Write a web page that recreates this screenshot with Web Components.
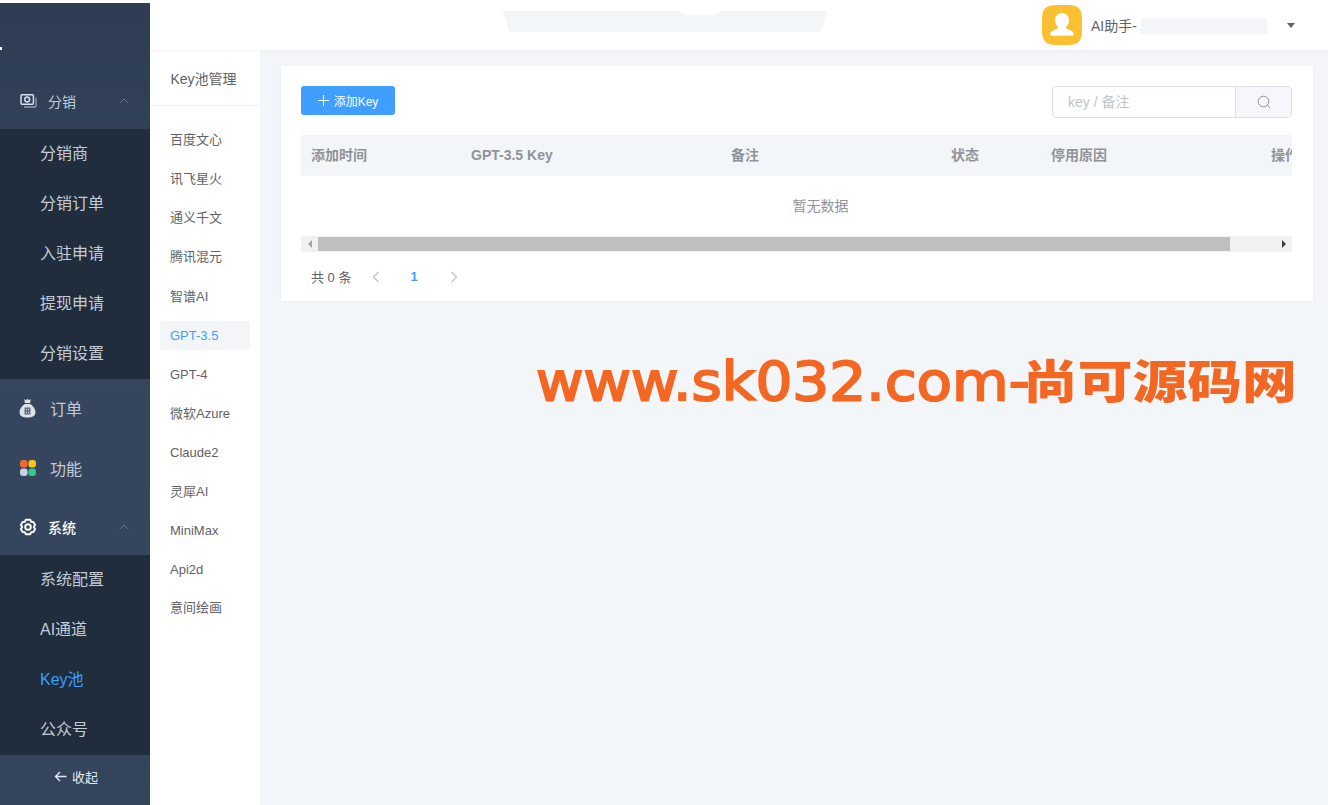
<!DOCTYPE html>
<html lang="zh">
<head>
<meta charset="utf-8">
<title>Key池</title>
<style>
html, body { margin: 0; padding: 0; height: 100%; background: #fff; overflow: hidden; }
body { font-family: "Liberation Sans", "Noto Sans CJK SC", sans-serif; }
app-shell { height: 805px; }
</style>
</head>
<body>
<app-shell>
  <side-bar slot="side">
    <nav-group label="分销" open icon="photos" head="54" lift="3">
      <nav-item>分销商</nav-item>
      <nav-item>分销订单</nav-item>
      <nav-item>入驻申请</nav-item>
      <nav-item>提现申请</nav-item>
      <nav-item>分销设置</nav-item>
    </nav-group>
    <nav-group label="订单" icon="bag" head="60" lift="3"></nav-group>
    <nav-group label="功能" icon="apps" head="60" lift="3"></nav-group>
    <nav-group label="系统" open bright icon="gear" head="56" lift="0">
      <nav-item>系统配置</nav-item>
      <nav-item>AI通道</nav-item>
      <nav-item active>Key池</nav-item>
      <nav-item>公众号</nav-item>
    </nav-group>
  </side-bar>
  <top-bar slot="top"></top-bar>
  <sub-nav slot="sub" title="Key池管理">
    <sub-item>百度文心</sub-item>
    <sub-item>讯飞星火</sub-item>
    <sub-item>通义千文</sub-item>
    <sub-item>腾讯混元</sub-item>
    <sub-item>智谱AI</sub-item>
    <sub-item active>GPT-3.5</sub-item>
    <sub-item>GPT-4</sub-item>
    <sub-item>微软Azure</sub-item>
    <sub-item>Claude2</sub-item>
    <sub-item>灵犀AI</sub-item>
    <sub-item>MiniMax</sub-item>
    <sub-item>Api2d</sub-item>
    <sub-item>意间绘画</sub-item>
  </sub-nav>
  <key-card slot="main"></key-card>
  <water-mark slot="over"><span slot="latin">www.sk032.com-</span><span slot="cjk">尚可源码网</span></water-mark>
</app-shell>

<script>
const ICONS = {
  photos: `<svg width="18" height="15" viewBox="0 0 18 15" fill="none">
    <path d="M17 4.500V13a1 1 0 0 1-1 1H5" stroke="#8fa0b4" stroke-width="1.300"/>
    <rect x="2" y="1.700" width="12.400" height="9.600" rx="1" stroke="#d5e0ea" stroke-width="1.500"/>
    <circle cx="8.200" cy="6.500" r="2.400" stroke="#d5e0ea" stroke-width="1.500"/></svg>`,
  bag: `<svg width="17" height="20" viewBox="0 0 17 20"><path fill="#dfe3e8" d="M5.200 1 7 2.300 8.500.8 10 2.300 11.800 1l-.7 4H5.900zM5.700 6h5.600c2.900 2.100 5.200 5 5.200 8.200 0 3.600-2.700 5.300-8 5.300s-8-1.700-8-5.300C.5 11 2.800 8.100 5.700 6z"/><path fill="none" stroke="#56677e" stroke-width="1.300" d="M6.200 10.200h4.600v5.600H6.200zM8.500 10.200v5.600M6.200 13h4.600"/></svg>`,
  apps: `<svg width="18" height="18" viewBox="0 0 18 18"><rect x="1" y="1" width="7.600" height="7.600" rx="3" fill="#f4682c"/><rect x="9.400" y="1" width="7.600" height="7.600" rx="3" fill="#fcc419"/><rect x="1" y="9.400" width="7.600" height="7.600" rx="3" fill="#c9cfe6"/><rect x="9.400" y="9.400" width="7.600" height="7.600" rx="3" fill="#2ecc8b"/></svg>`,
  gear: `<svg width="18" height="18" viewBox="0 0 18 18" fill="none" stroke="#fff" stroke-width="1.900" stroke-linejoin="round"><path d="M6.700 1.800h4.600l.9 2 2.200.2 1.700 2.900-1.300 2.100 1.300 2.100-1.700 2.900-2.200.2-.9 2H6.700l-.9-2-2.200-.2-1.700-2.900L3.200 9 1.900 6.900 3.600 4l2.200-.2z"/><circle cx="9" cy="9" r="2.800"/></svg>`
};

class AppShell extends HTMLElement {
  constructor() {
    super();
    this.attachShadow({ mode: "open" }).innerHTML = `
      <style>
        :host { display: flex; position: relative; width: 1328px; overflow: hidden; background: #fff; }
        .side { display: block; width: 150px; flex: none; padding-top: 3px; box-sizing: border-box; height: 100%; }
        .right { flex: 1; display: flex; flex-direction: column; min-width: 0; }
        .body { flex: 1; display: flex; background: #f2f6f9; min-height: 0; }
        .main { flex: 1; padding: 16px 15px 0 21px; min-width: 0; }
      </style>
      <div class="side"><slot name="side"></slot></div>
      <div class="right">
        <slot name="top"></slot>
        <div class="body">
          <slot name="sub"></slot>
          <div class="main"><slot name="main"></slot></div>
        </div>
      </div>
      <slot name="over"></slot>`;
  }
}

class SideBar extends HTMLElement {
  constructor() {
    super();
    this.attachShadow({ mode: "open" }).innerHTML = `
      <style>
        :host { display: flex; flex-direction: column; height: 100%; background: linear-gradient(#2e3d53, #36465e 40%, #34445c); color: #cfd6df; position: relative; }
        .logo { height: 72px; flex: none; }
        .tick { position: absolute; left: 0; top: 44px; width: 2px; height: 3px; background: #fff; }
        .list { flex: 1; }
        .fold { height: 50px; flex: none; display: flex; align-items: center; justify-content: center; gap: 5px; font-size: 13px; color: #e4e8ee; padding: 0 0 8px 2px; box-sizing: border-box; }
        svg { display: block; }
      </style>
      <div class="logo"><div class="tick"></div></div>
      <div class="list"><slot></slot></div>
      <div class="fold">
        <svg width="13" height="11" viewBox="0 0 13 11" fill="none" stroke="#e4e8ee" stroke-width="1.400"><path d="M12.500 5.500H1.500M6 1 1.500 5.500 6 10"/></svg>
        <span>收起</span>
      </div>`;
  }
}

class NavGroup extends HTMLElement {
  constructor() {
    super();
    const open = this.hasAttribute("open");
    const bright = this.hasAttribute("bright");
    const label = this.getAttribute("label");
    const icon = ICONS[this.getAttribute("icon")];
    this.attachShadow({ mode: "open" }).innerHTML = `
      <style>
        :host { display: block; }
        .head { display: flex; align-items: center; height: ${this.getAttribute("head")}px; padding: 0 0 ${this.getAttribute("lift")}px 18px; box-sizing: border-box; }
        .ico { width: 19px; display: flex; justify-content: center; margin-right: ${open ? 11 : 13}px; }
        .label { font-size: ${open ? 14 : 16}px; color: ${bright ? "#fff" : "#c3ccd6"}; flex: 1; ${bright ? "font-weight:500;" : ""} }
        .arrow { margin-right: 21px; }
        .sub { background: #1f2d3d; }
        svg { display: block; }
      </style>
      <div class="head">
        <span class="ico">${icon}</span>
        <span class="label">${label}</span>
        ${open ? `<svg class="arrow" width="10" height="6" viewBox="0 0 10 6" fill="none" stroke="#66758a" stroke-width="1"><path d="M.8 5.300 5 1l4.200 4.300"/></svg>` : ""}
      </div>
      ${open ? `<div class="sub"><slot></slot></div>` : ""}`;
  }
}

class NavItem extends HTMLElement {
  constructor() {
    super();
    this.attachShadow({ mode: "open" }).innerHTML = `
      <style>
        :host { display: flex; align-items: center; height: 50px; box-sizing: border-box; padding: 0 0 4px 40px; font-size: 16px; color: #c3ccd6; }
        :host([active]) { color: #409eff; }
      </style>
      <slot></slot>`;
  }
}

class TopBar extends HTMLElement {
  constructor() {
    super();
    this.attachShadow({ mode: "open" }).innerHTML = `
      <style>
        :host { display: flex; align-items: center; height: 50px; flex: none; background: #fff; position: relative; z-index: 1; box-sizing: border-box; padding-left: 353px; box-shadow: 0 1px 3px rgba(0,21,41,.05); }
        .blur { background: #f3f6f8; filter: blur(.6px); }
        .title { width: 324px; height: 21px; margin-top: -7px; clip-path: polygon(0 0, 54% 0, 57% 18%, 65% 18%, 67% 0, 100% 0, 98% 100%, 2% 100%); }
        .user { margin-left: 215px; display: flex; align-items: center; }
        .ava { width: 40px; height: 40px; margin-right: 9px; }
        .name { font-size: 14px; color: #606266; }
        .blur2 { width: 126px; height: 16px; margin-left: 4px; margin-top: 2px; }
        .caret { margin-left: 20px; width: 0; height: 0; border: 4px solid transparent; border-top: 5px solid #606266; border-bottom: 0; }
        svg { display: block; }
      </style>
      <div class="blur title"></div>
      <div class="user">
        <svg class="ava" viewBox="0 0 40 40"><path fill="#fbbf32" d="M14 0h12c10 0 14 4 14 14v12c0 10-4 14-14 14H14C4 40 0 36 0 26V14C0 4 4 0 14 0z"/><path fill="#fff" d="M20 8c4.200 0 7 3 7 7.300 0 2.800-1 4.900-2.600 6.300-.7.600-.6 1.700.3 2.100l4.300 1.900c1.800.8 2.700 2 2.700 3.600 0 .9-.7 1.500-1.600 1.500H9.900c-.9 0-1.600-.6-1.600-1.500 0-1.600.9-2.800 2.700-3.600l4.300-1.900c.9-.4 1-1.500.3-2.100C14 20.200 13 18.100 13 15.300 13 11 15.800 8 20 8z"/></svg>
        <span class="name">AI助手-</span>
        <div class="blur blur2"></div>
        <div class="caret"></div>
      </div>`;
  }
}

class SubNav extends HTMLElement {
  constructor() {
    super();
    this.attachShadow({ mode: "open" }).innerHTML = `
      <style>
        :host { display: block; width: 110px; flex: none; background: #fff; box-sizing: border-box; }
        .title { height: 56px; line-height: 58px; border-bottom: 1px solid #eceff3; text-align: center; font-size: 14px; color: #606266; box-sizing: border-box; padding-right: 3px; }
        .items { display: flex; flex-direction: column; gap: 10px; padding: 20px 10px 0; }
      </style>
      <div class="title">${this.getAttribute("title")}</div>
      <div class="items"><slot></slot></div>`;
  }
}

class SubItem extends HTMLElement {
  constructor() {
    super();
    this.attachShadow({ mode: "open" }).innerHTML = `
      <style>
        :host { display: flex; align-items: center; height: 29px; box-sizing: border-box; padding-left: 10px; font-size: 13px; color: #606266; border-radius: 2px; }
        :host([active]) { background: #f2f6f9; color: #409eff; }
      </style>
      <slot></slot>`;
    // cjk glyphs sit lower than in the reference font
    const text = this.textContent.trim();
    if (/^[\u4e00-\u9fff]+$/.test(text)) this.style.paddingBottom = "4px";
    else if (/[\u4e00-\u9fff]/.test(text)) this.style.paddingBottom = "2px";
  }
}

class KeyCard extends HTMLElement {
  constructor() {
    super();
    const cols = [["添加时间", 160], ["GPT-3.5 Key", 260], ["备注", 220], ["状态", 100], ["停用原因", 220], ["操作", 60]];
    this.attachShadow({ mode: "open" }).innerHTML = `
      <style>
        :host { display: block; background: #fff; height: 235px; box-sizing: border-box; padding: 20px 21px 0 20px; box-shadow: 0 0 3px rgba(0,20,40,.05); color: #606266; }
        .tools { display: flex; justify-content: space-between; align-items: flex-start; height: 49px; }
        .add { display: flex; align-items: center; justify-content: center; gap: 5px; width: 94px; height: 29px; background: #409eff; color: #fff; font-size: 12px; border-radius: 3px; }
        .search { display: flex; width: 240px; height: 32px; box-sizing: border-box; border: 1px solid #dcdfe6; border-radius: 4px; }
        .search .ph { flex: 1; padding-left: 15px; font-size: 14px; line-height: 31px; color: #c0c4cc; }
        .search .btn { width: 56px; flex: none; box-sizing: border-box; background: #f5f7fa; border-left: 1px solid #dcdfe6; display: flex; align-items: center; justify-content: center; border-radius: 0 3px 3px 0; }
        .thead { display: flex; height: 41px; background: #f3f6f8; overflow: hidden; }
        .thead span { flex: none; padding-left: 10px; box-sizing: border-box; font-size: 14px; font-weight: bold; color: #909399; line-height: 40px; white-space: nowrap; }
        .empty { height: 60px; line-height: 60px; padding-left: 48px; text-align: center; font-size: 14px; color: #909399; }
        .bar { display: flex; align-items: center; height: 16px; background: #f1f1f1; }
        .bar i { display: flex; width: 17px; justify-content: center; flex: none; }
        .bar .track { flex: 1; height: 14px; }
        .bar .thumb { width: 912px; height: 14px; background: #bfbfbf; }
        .arrow-l { width: 0; height: 0; border: 4px solid transparent; border-right: 4px solid #a3a3a3; border-left: 0; }
        .arrow-r { width: 0; height: 0; border: 4px solid transparent; border-left: 4px solid #404040; border-right: 0; }
        .pager { display: flex; align-items: center; height: 49px; padding-left: 10px; font-size: 13px; color: #606266; }
        .pager .num { font-weight: bold; color: #409eff; font-size: 13px; margin: 0 32px 0 30px; }
        .pager .prev { margin-left: 21px; }
        svg { display: block; }
      </style>
      <div class="tools">
        <div class="add">
          <svg width="11" height="11" viewBox="0 0 11 11" stroke="#fff" stroke-width="1.100"><path d="M5.500 0v11M0 5.500h11"/></svg>
          <span>添加Key</span>
        </div>
        <div class="search">
          <div class="ph">key / 备注</div>
          <div class="btn">
            <svg width="14" height="14" viewBox="0 0 14 14" fill="none" stroke="#909399" stroke-width="1"><circle cx="6.500" cy="6.500" r="5.300"/><path d="m10.500 10.500 2.500 2.500"/></svg>
          </div>
        </div>
      </div>
      <div class="thead">${cols.map(c => `<span style="width:${c[1]}px">${c[0]}</span>`).join("")}</div>
      <div class="empty">暂无数据</div>
      <div class="bar">
        <i><span class="arrow-l"></span></i>
        <div class="track"><div class="thumb"></div></div>
        <i><span class="arrow-r"></span></i>
      </div>
      <div class="pager">
        <span>共 0 条</span>
        <svg class="prev" width="8" height="12" viewBox="0 0 8 12" fill="none" stroke="#c0c4cc" stroke-width="1.300"><path d="M6.500 1 1.500 6l5 5"/></svg>
        <span class="num">1</span>
        <svg width="8" height="12" viewBox="0 0 8 12" fill="none" stroke="#c0c4cc" stroke-width="1.300"><path d="m1.500 1 5 5-5 5"/></svg>
      </div>`;
  }
}

// watermark: latin is thin and wide, cjk heavier, so each part is stretched on its own
class WaterMark extends HTMLElement {
  constructor() {
    super();
    this.attachShadow({ mode: "open" }).innerHTML = `
      <style>
        :host { position: absolute; left: 539px; top: 350px; display: flex; align-items: baseline; white-space: nowrap; color: #f46723; }
        .latin { width: 486px; flex: none; font: 400 54px/62px "DejaVu Sans", sans-serif; -webkit-text-stroke: 2px #f46723; transform: translate(-3px, -1px) scaleX(1.075); transform-origin: 0 0; }
        .cjk { flex: none; font: 900 46px/62px "Noto Sans CJK SC", sans-serif; transform: translate(-2px, -3px) scaleX(1.19); transform-origin: 0 0; }
      </style>
      <div class="latin"><slot name="latin"></slot></div>
      <div class="cjk"><slot name="cjk"></slot></div>`;
  }
}

customElements.define("app-shell", AppShell);
customElements.define("side-bar", SideBar);
customElements.define("nav-group", NavGroup);
customElements.define("nav-item", NavItem);
customElements.define("top-bar", TopBar);
customElements.define("sub-nav", SubNav);
customElements.define("sub-item", SubItem);
customElements.define("key-card", KeyCard);
customElements.define("water-mark", WaterMark);
</script>
</body>
</html>
